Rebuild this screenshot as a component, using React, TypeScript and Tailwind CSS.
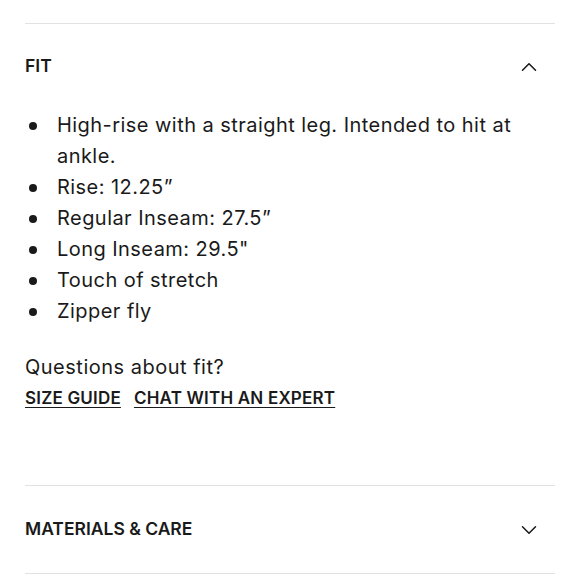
import {ChevronUp, ChevronDown} from "lucide-react";

const FIT_POINTS = [
  "High-rise with a straight leg. Intended to hit at ankle.",
  "Rise: 12.25\u201d",
  "Regular Inseam: 27.5\u201d",
  "Long Inseam: 29.5\"",
  "Touch of stretch",
  "Zipper fly",
];

const App = () => {
  return (
    <div
      className="w-[580px] h-[580px] bg-white text-[#1a1a1a] px-[25px] pt-[23px]"
      style={{fontFamily: "Inter, 'Noto Sans', sans-serif"}}
    >
      <div className="border-t border-[#e2e2e2]">
        <button className="w-full flex items-center justify-between h-[86px] pb-[1px]">
          <span className="text-[17.5px] font-semibold">FIT</span>
          <ChevronUp className="w-[26px] h-[26px] mr-[13px]" strokeWidth={1.4} />
        </button>
        <ul className="text-[20px] leading-[31px] tracking-[0.45px] pr-[30px]">
          {FIT_POINTS.map((point) => (
            <li key={point} className="flex">
              <span className="w-[32px] shrink-0 h-[31px] flex items-center pl-[4px]">
                <span className="w-[8px] h-[8px] rounded-full bg-[#1a1a1a]" />
              </span>
              <span>{point}</span>
            </li>
          ))}
        </ul>
        <p className="text-[20px] leading-[31px] tracking-[0.5px] mt-[25px]">Questions about fit?</p>
        <div className="flex gap-[13px] text-[17px] tracking-[0.2px] font-semibold leading-[31px]">
          <a className="underline underline-offset-[3px]">SIZE GUIDE</a>
          <a className="underline underline-offset-[3px]">CHAT WITH AN EXPERT</a>
        </div>
      </div>
      <div className="border-t border-b border-[#e2e2e2] mt-[71px]">
        <button className="w-full flex items-center justify-between h-[87px]">
          <span className="text-[17.5px] font-semibold">MATERIALS &amp; CARE</span>
          <ChevronDown className="w-[26px] h-[26px] mr-[13px]" strokeWidth={1.4} />
        </button>
      </div>
    </div>
  );
};

export default App;
